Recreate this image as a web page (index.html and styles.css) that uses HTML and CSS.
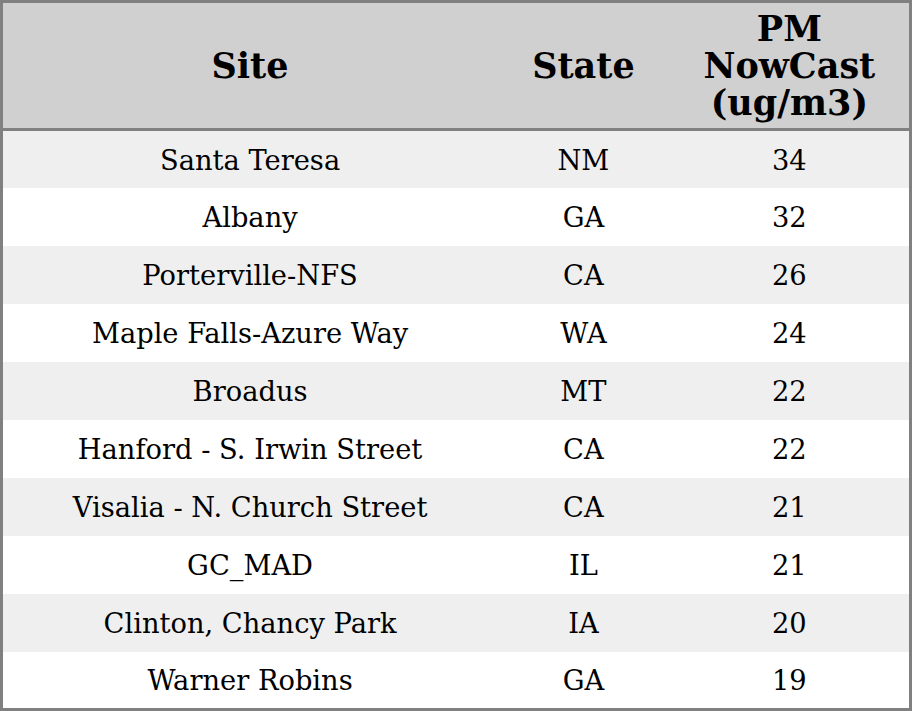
FILE: index.html
```html
<!DOCTYPE html>
<html>
<head>
<meta charset="utf-8">
<link rel="stylesheet" href="styles.css">
</head>
<body>
<table class="pm-table">
  <colgroup>
    <col class="col-site">
    <col class="col-state">
    <col class="col-pm">
  </colgroup>
  <thead>
    <tr class="head-row">
      <th>Site</th>
      <th>State</th>
      <th>PM<br>NowCast<br>(ug/m3)</th>
    </tr>
  </thead>
  <tbody>
    <tr><td>Santa Teresa</td><td>NM</td><td>34</td></tr>
    <tr><td>Albany</td><td>GA</td><td>32</td></tr>
    <tr><td>Porterville-NFS</td><td>CA</td><td>26</td></tr>
    <tr><td>Maple Falls-Azure Way</td><td>WA</td><td>24</td></tr>
    <tr><td>Broadus</td><td>MT</td><td>22</td></tr>
    <tr><td>Hanford - S. Irwin Street</td><td>CA</td><td>22</td></tr>
    <tr><td>Visalia - N. Church Street</td><td>CA</td><td>21</td></tr>
    <tr><td>GC_MAD</td><td>IL</td><td>21</td></tr>
    <tr><td>Clinton, Chancy Park</td><td>IA</td><td>20</td></tr>
    <tr><td>Warner Robins</td><td>GA</td><td>19</td></tr>
  </tbody>
</table>
</body>
</html>
```
FILE: styles.css
```css
html, body {
  margin: 0;
  padding: 0;
  background: #ffffff;
}

.pm-table {
  width: 912px;
  height: 711px;
  border-collapse: collapse;
  border: 3px solid #808080;
  table-layout: fixed;
  font-family: "DejaVu Serif", serif;
  color: #000000;
}

.col-site { width: 494px; }
.col-state { width: 172px; }
.col-pm { width: 240px; }

.head-row {
  height: 128px;
  background: #d0d0d0;
  border-bottom: 3px solid #808080;
}

.head-row th {
  font-size: 35px;
  font-weight: bold;
  line-height: 37.3px;
  padding: 0;
  text-align: center;
  vertical-align: middle;
}

.pm-table tbody tr {
  height: 57.7px;
}

.pm-table tbody tr:nth-child(odd) {
  background: #efefef;
}

.pm-table tbody tr:nth-child(even) {
  background: #ffffff;
}

.pm-table td {
  font-size: 27.3px;
  padding: 2px 0 0 0;
  text-align: center;
  vertical-align: middle;
}
```
